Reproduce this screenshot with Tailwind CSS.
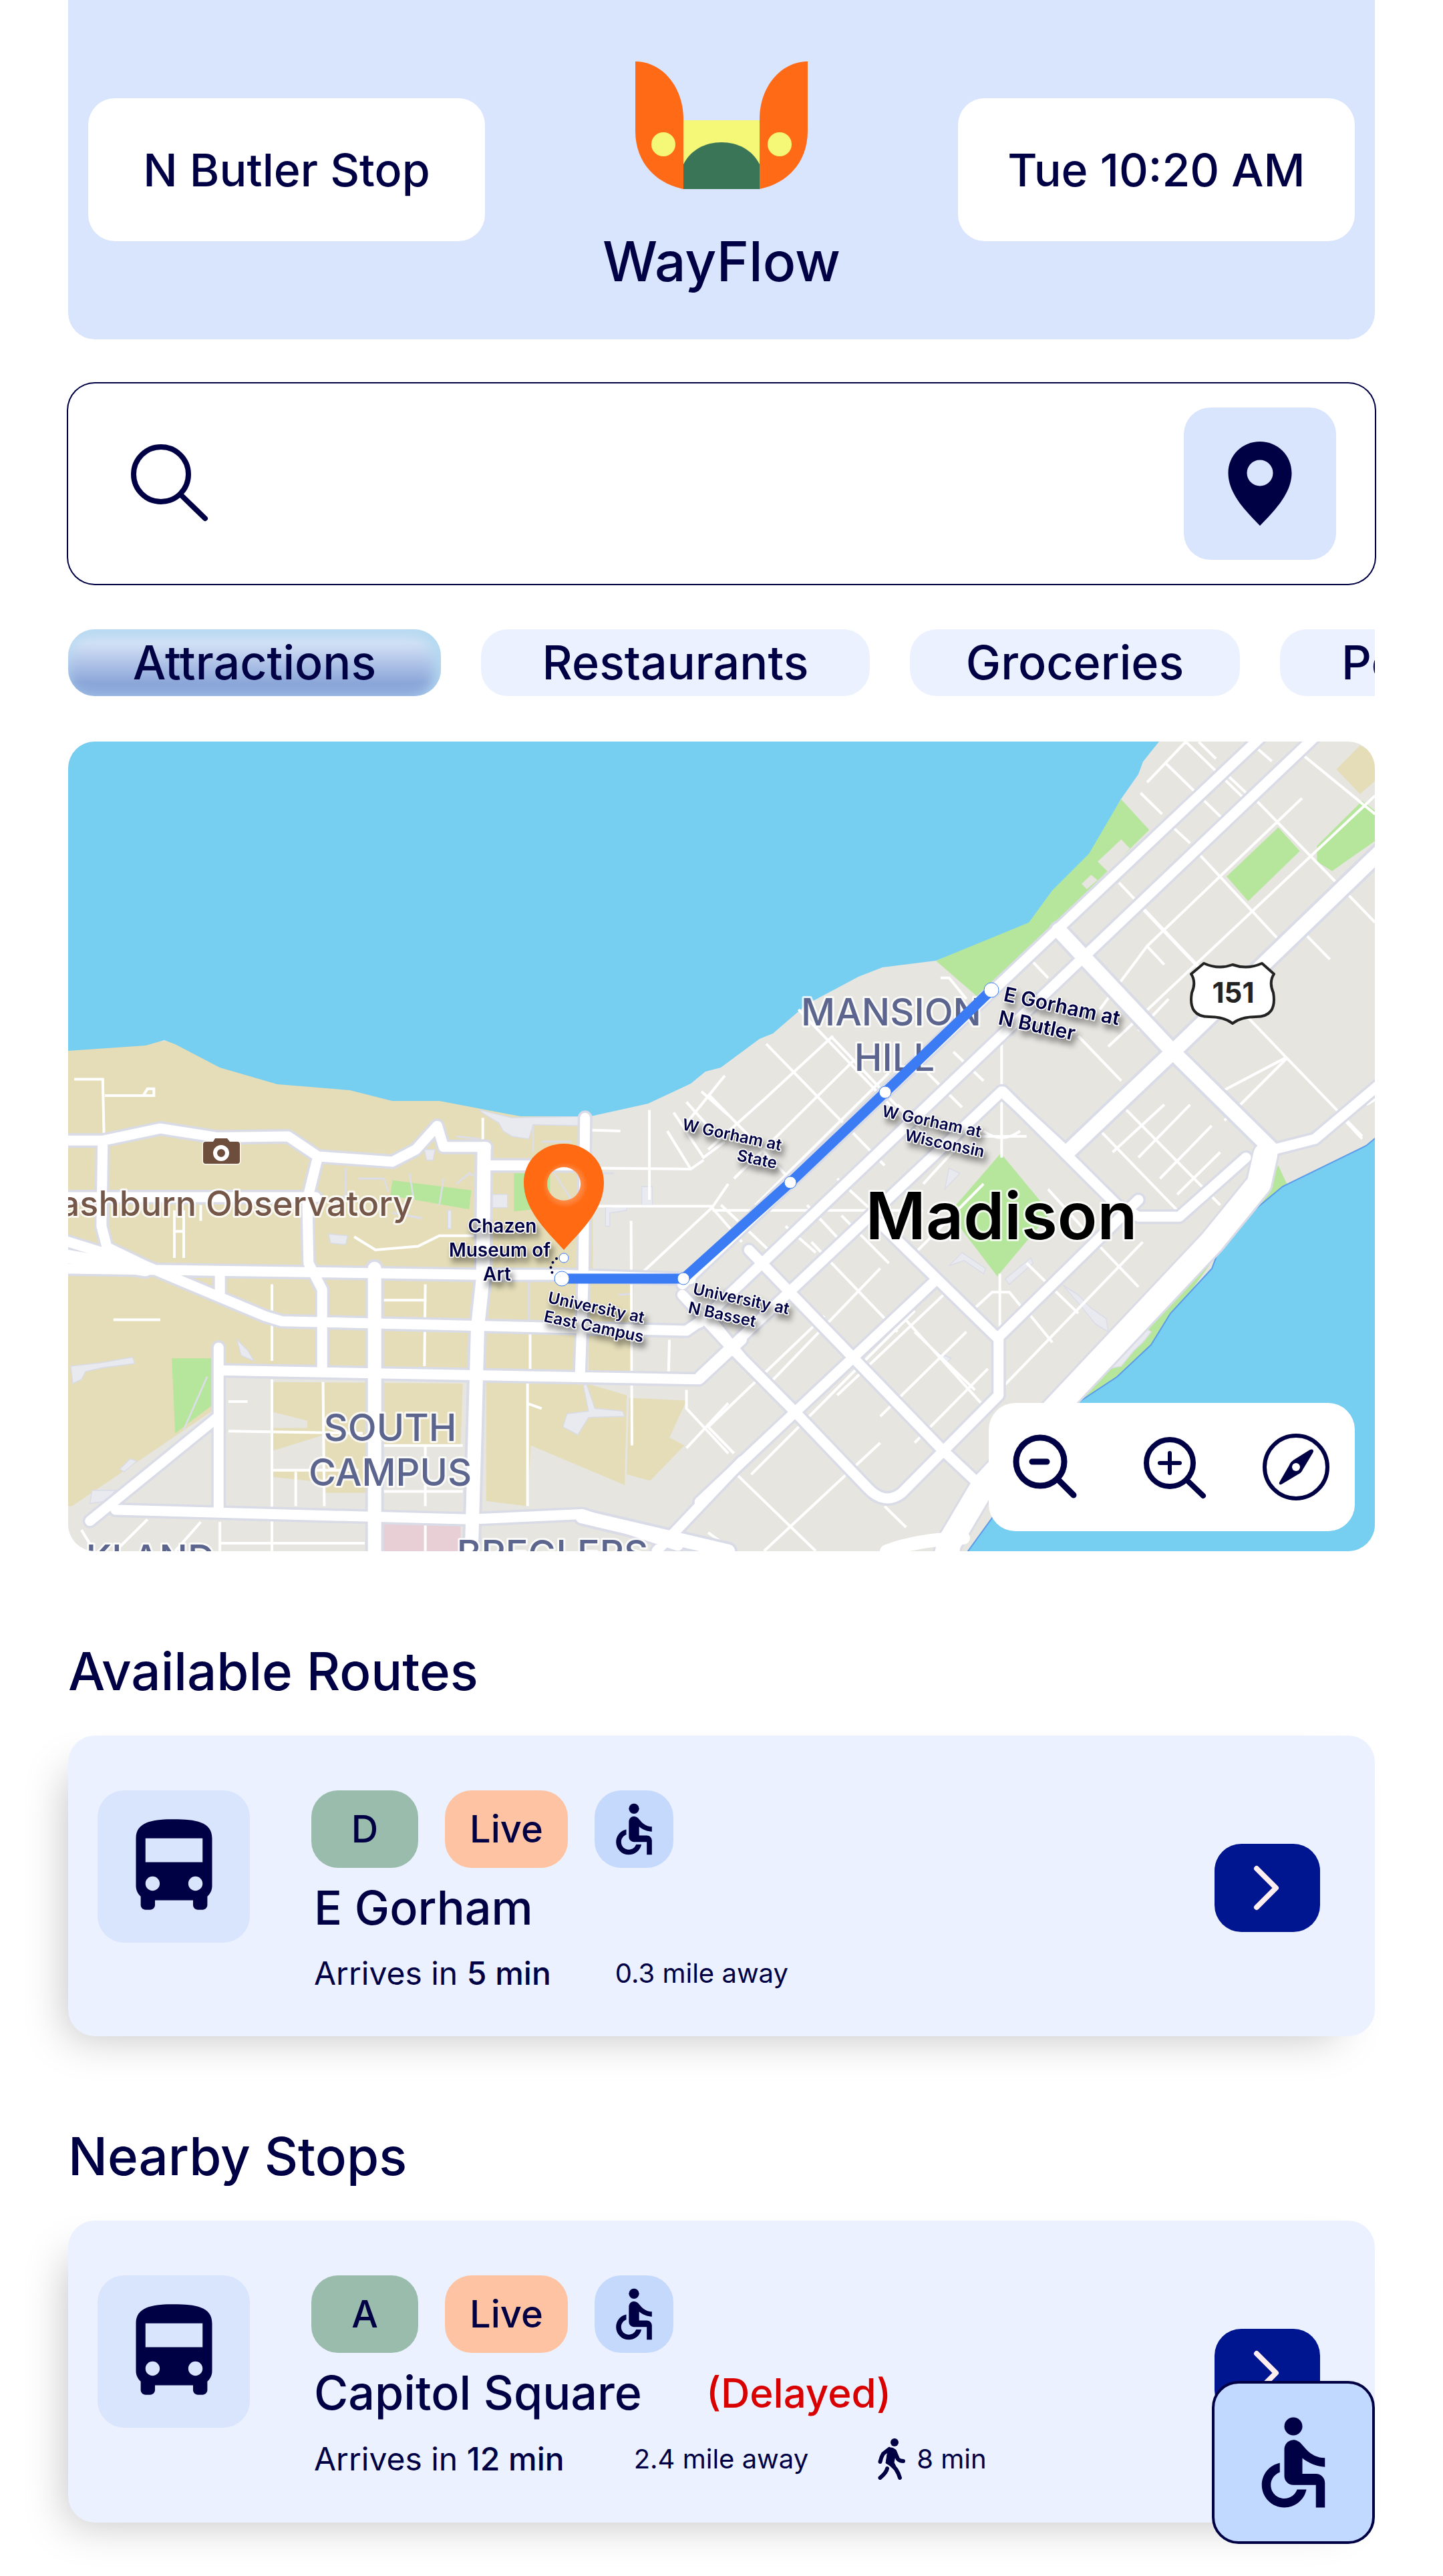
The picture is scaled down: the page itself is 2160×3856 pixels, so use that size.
<!DOCTYPE html>
<html lang="en">
<head>
  <meta charset="UTF-8">
  <meta name="viewport" content="width=device-width, initial-scale=1.0">
  <title>WayFlow</title>
  <script src="https://cdn.jsdelivr.net/npm/@tailwindcss/browser@4"></script>
</head>
<body class="bg-white text-[#000044] font-[Inter,'Open_Sans',sans-serif] font-medium">

  <!-- shared icons -->
  <svg class="hidden" aria-hidden="true">
    <symbol id="bus" viewBox="0 0 24 24">
      <path d="M4 16c0 .88.39 1.67 1 2.22V20c0 .55.45 1 1 1h1c.55 0 1-.45 1-1v-1h8v1c0 .55.45 1 1 1h1c.55 0 1-.45 1-1v-1.78c.61-.55 1-1.34 1-2.22V6c0-3.5-3.58-4-8-4s-8 .5-8 4v10zm3.5 1c-.83 0-1.5-.67-1.5-1.5S6.67 14 7.5 14s1.5.67 1.5 1.5S8.33 17 7.5 17zm9 0c-.83 0-1.5-.67-1.5-1.5s.67-1.5 1.5-1.5 1.5.67 1.5 1.5-.67 1.5-1.5 1.5zm1.5-6H6V6h12v5z"/>
    </symbol>
    <symbol id="wheelchair" viewBox="0 0 24 24">
      <circle cx="12" cy="4" r="2"/>
      <path d="M19 13v-2c-1.54.02-3.09-.75-4.07-1.83l-1.29-1.43c-.17-.19-.38-.34-.61-.45-.01 0-.01-.01-.02-.01H13c-.35-.2-.75-.3-1.19-.26C10.76 7.11 10 8.04 10 9.09V15c0 1.1.9 2 2 2h5v5h2v-5.5c0-1.1-.9-2-2-2h-3v-3.45c1.29 1.07 3.25 1.94 5 1.95zm-6.17 5c-.41 1.16-1.52 2-2.83 2-1.66 0-3-1.34-3-3 0-1.31.84-2.41 2-2.83V12.1c-2.28.46-4 2.48-4 4.9 0 2.76 2.24 5 5 5 2.42 0 4.44-1.72 4.9-4h-2.07z"/>
    </symbol>
    <symbol id="chevron" viewBox="0 0 44 72">
      <path d="M6 7L35 36L6 65" fill="none" stroke="#ffeef0" stroke-width="8" stroke-linecap="round" stroke-linejoin="round"/>
    </symbol>
  </svg>

  <main class="px-[102px] pb-[82px]">

    <header class="flex items-center justify-between bg-[#d9e4fd] rounded-b-[40px] px-[30px] py-[68px]">
      <div class="w-[594px] h-[214px] rounded-[40px] bg-white flex items-center justify-center text-[68px]">N Butler Stop</div>
      <div class="flex flex-col items-center pt-6">
        <svg class="w-[260px] h-[192px]" viewBox="0 0 260 192">
          <path d="M73 88H187V191H73z" fill="#f5f877"/>
          <path d="M73 191V154C84 132 106 121 130 121S176 132 187 154V191z" fill="#3a7558"/>
          <path d="M1 0C41 0 73 38 73 86V191C30 182 1 150 1 104z" fill="#ff6a16"/>
          <path d="M259 0C219 0 187 38 187 86V191C230 182 259 150 259 104z" fill="#ff6a16"/>
          <circle cx="43" cy="124" r="18" fill="#f5f877"/>
          <circle cx="217" cy="124" r="18" fill="#f5f877"/>
        </svg>
        <h1 class="mt-[60px] text-[82px] leading-[96px]">WayFlow</h1>
      </div>
      <div class="w-[594px] h-[214px] rounded-[40px] bg-white flex items-center justify-center text-[68px]">Tue 10:20 AM</div>
    </header>

    <form class="mt-[66px] flex items-center rounded-[40px] ring-2 ring-[#000044] pl-[92px] pr-[58px] py-9">
      <label for="search" aria-label="Search">
        <svg class="w-[120px] h-[120px]" viewBox="0 0 120 120" fill="none" stroke="#000044" stroke-width="8" stroke-linecap="round">
          <circle cx="47" cy="46" r="41"/>
          <path d="M77 77L113 112"/>
        </svg>
      </label>
      <input id="search" type="text" class="flex-1 min-w-0 mx-10 h-[120px] text-[68px] outline-none">
      <button type="button" aria-label="Use my location" class="size-[228px] rounded-[40px] bg-[#d9e4fd] flex items-center justify-center">
        <svg class="w-[96px] h-[126px]" viewBox="0 0 96 126">
          <path d="M48 0C21 0 0.500 21 0.500 47C0.500 79 29 106 48 126C67 106 95.500 79 95.500 47C95.500 21 75 0 48 0zM48 27.500A19.500 19.500 0 1 1 48 66.500A19.500 19.500 0 1 1 48 27.500z" fill="#000044"/>
        </svg>
      </button>
    </form>

    <nav class="mt-[68px] flex gap-[60px] overflow-hidden text-[70px] leading-[100px]">
      <button class="shrink-0 w-[558px] h-[100px] rounded-[40px] bg-linear-to-b from-[#d6e2f6] from-20% to-[#8ba6d9] to-80% shadow-[inset_-6px_8px_20px_4px_#b4d9f1]">Attractions</button>
      <button class="shrink-0 w-[582px] h-[100px] rounded-[40px] bg-[#ebf1fe]">Restaurants</button>
      <button class="shrink-0 w-[494px] h-[100px] rounded-[40px] bg-[#ebf1fe]">Groceries</button>
      <button class="shrink-0 w-[400px] h-[100px] rounded-[40px] bg-[#ebf1fe] pl-[92px] text-left">Post</button>
    </nav>

    <section class="relative mt-[68px] rounded-[40px] overflow-hidden">
      <svg class="block w-full" viewBox="0 0 1956 1212" font-family="Inter, sans-serif">
        <defs>
          <g id="streets-west" transform="translate(-12 -10) scale(.6378 .7908)">
            <path vector-effect="non-scaling-stroke" d="M0 768H100L235 745L370 762L535 760L605 798L780 808L835 785L885 740L900 780H1000M100 768L97 930L110 970L200 1005M0 875H600M605 798L580 880L583 1000L615 1050V1200M0 955L200 1005L480 1100L520 1110L1470 1128L1520 1100L1600 1180M0 1010L980 1022H1180L1480 1030M1000 815H1230M1232 725L1228 1030L1220 1215M375 1203L1500 1220L1600 1145M372 1160V1290L70 1488M372 1290V1465M130 1467L960 1485L1225 1475L1450 1535M1400 1545L1600 1375M375 1020V1060"/>
          </g>
          <g id="streets-west-wide" transform="translate(-12 -10) scale(.6378 .7908)">
            <path vector-effect="non-scaling-stroke" d="M995 783L992 1030L980 1120L965 1560M738 1010V1560M0 985L200 1012M1225 1480L1568 1545"/>
          </g>
          <g id="streets-east" transform="translate(958 -10) scale(.6441 .7908)">
            <path vector-effect="non-scaling-stroke" d="M1290 0L-60 1040M1415 0L-20 1113M835 790L682 675L-20 1215M525 1035L-20 1452M400 925L670 1140M95 975L540 1350L625 1415M-60 1060L60 1165L200 1280L370 1425Q410 1460 450 1435L675 1250V1140L1000 880M685 675L950 890L1000 912H1095L1250 800M1290 790L1410 765L1570 655"/>
          </g>
          <g id="streets-east-wide" transform="translate(958 -10) scale(.6441 .7908)">
            <path vector-effect="non-scaling-stroke" d="M815 370L1080 600L1310 785M1570 215L1080 600L835 790"/>
          </g>
          <g id="drive" transform="translate(958 -10) scale(.6441 .7908)">
            <path vector-effect="non-scaling-stroke" d="M1295 795L1280 850L1170 960L800 1280L640 1420L560 1530L540 1600"/>
          </g>
          <radialGradient id="pin-fill" gradientUnits="userSpaceOnUse" cx="744" cy="664" r="34">
            <stop offset=".7" stop-color="#ff8a45"/>
            <stop offset="1" stop-color="#ff6a13"/>
          </radialGradient>
          <filter id="label-shadow" x="-20%" y="-40%" width="150%" height="220%">
            <feDropShadow dx="4" dy="8" stdDeviation="4" flood-color="#000" flood-opacity=".4"/>
          </filter>
        </defs>

        <rect width="1956" height="1212" fill="#e6e5e0"/>

        <!-- campus ground and parks -->
        <g transform="translate(-12 -10) scale(.6378 .7908)">
          <path fill="#e4ddb8" d="M0 580H300L1000 690L1235 722L1220 1215H375V1270L28 1460H0zM500 1225L945 1228L940 1345H725L720 1435H620V1415L500 1405V1392H620V1325L500 1355V1312H580V1298L500 1282zM1000 1225L1245 1230L1330 1250L1325 1420L1105 1345L1095 1460L1000 1450zM1335 1255L1470 1260L1430 1330L1465 1345L1385 1412L1330 1400zM1240 900H1250V1030L1345 1035V1215L1240 1205z"/>
          <path fill="#b6e69c" d="M780 843L965 862L960 898L775 872zM1065 830H1150V895L1065 902zM262 1180H355V1270L270 1322z"/>
          <path fill="#e8cfd6" d="M755 1490H940V1560H755z"/>
          <path fill="#e9eaf0" stroke="#d9dbe6" stroke-width="2" d="M985 710L1060 725L1230 722V740L1110 738L1100 765L1060 760L1040 750L1030 735L990 715zM25 1195L100 1188L170 1178L175 1190L100 1198L60 1205L50 1220L30 1228zM1235 1228L1255 1275L1320 1280L1325 1290L1240 1292L1215 1325L1180 1310L1190 1285L1240 1280L1228 1232zM630 945L675 948L670 965L635 962zM1365 855L1390 855V890H1365zM75 1430H130L110 1450L70 1455zM415 1145L440 1165L455 1185L425 1175zM140 1390L165 1370L180 1375L150 1395zM1280 895L1330 890V900L1290 905V930H1280zM855 785H880L875 805H860zM1010 870H1050V895H1010zM910 900H918V935H910z"/>
          <path fill="none" stroke="#dcdde6" stroke-width="4" d="M670 820V870L640 890M700 840H760L770 865M820 830L830 880M900 840L890 890M930 850L960 830L985 840M780 905L850 915M1160 830L1200 880V960M1260 830H1300M1110 740V790M1130 770H1200M930 760L985 765M1100 1030V1110M1310 1060L1345 1058M345 1215L290 1315"/>
        </g>
        <g transform="translate(958 -10) scale(.6441 .7908)">
          <path fill="#b6e69c" d="M530 428L745 340L885 210L960 122L1025 180L820 345L625 495zM1205 268L1325 175L1375 220L1255 315zM1415 210L1520 125L1560 150V195L1450 258L1415 240zM680 792L795 905L672 1025L560 905zM1325 815L1345 850L1250 912zM1190 975L1080 1100L1035 1160L955 1220L840 1275L1000 1130z"/>
          <path fill="#e6e5e0" d="M905 240L960 198L980 215L930 260zM868 282L890 265L905 275L880 292z"/>
          <path fill="#e4ddb8" d="M1460 65L1515 20L1560 40V80L1515 112z"/>
          <path fill="#e9eaf0" stroke="#d9dbe6" stroke-width="2" d="M825 1042L860 1060L890 1085L925 1105L930 1130L900 1115L870 1085zM1000 1115L1030 1130L1010 1150L990 1165L960 1195L930 1200L950 1170L980 1155zM530 1168L565 1180L555 1188zM590 980L645 1010L640 1020L595 995L560 1005zM690 1030L750 990L755 1000L700 1040zM550 860L585 830L560 820z"/>
        </g>

        <!-- lakes -->
        <path fill="#76cef1" d="M0 0H1633L1609 30L1602 49L1576 86L1528 168L1473 223L1438 271L1299 328L1219 338L1183 352L1106 393L1055 437L1035 445L977 488L954 494L932 512L868 542L782 561H677L556 538H485L422 522L313 513L227 488L160 453L144 447L116 455L0 463z"/>
        <path fill="#76cef1" stroke="#5b9bea" stroke-width="2" d="M1960 591L1943 605L1818 666L1770 706L1721 765L1712 789L1650 856L1621 903L1570 951L1505 994L1344 1216H1960z"/>

        <!-- side streets -->
        <g fill="none" stroke="#fff">
          <g transform="translate(-12 -10) scale(.6378 .7908)">
            <path vector-effect="non-scaling-stroke" stroke-width="4" d="M33 652H100L103 760M105 683H220V670H205L195 683M268 900V990M290 990V900M268 940H290M330 890V920M497 1040V1185M497 1220V1545M857 1040L855 1195M757 1070H860M617 1225L620 1460M395 1318L710 1322M395 1262H440M500 1392H700M553 1395V1460M757 1345H945M757 1432H945M857 1345V1460M857 1495V1545M375 1530H715M375 1490V1545M50 1505L80 1545M130 1545L205 1485M270 1545L330 1490M690 950L740 975L840 968L890 948H985M125 1107H235M1103 1130V1200M1097 1220V1460M1340 920L1342 1345M1245 892H1530M1245 820L1480 822L1510 805M1383 710V880M1240 748L1315 750M1370 1015L1530 895L1568 850M1530 895L1600 960M1430 1145L1428 1205M1470 1240V1275L1568 1360M1470 1350L1568 1265M1470 695L1525 745M1470 735L1560 645M1505 675L1568 720M1440 715L1510 800L1560 770M1425 750L1480 822M992 725V780M1095 1265L1130 1275"/>
          </g>
          <g transform="translate(958 -10) scale(.6441 .7908)">
            <path vector-effect="non-scaling-stroke" stroke-width="4" d="M1005 110L1055 150M1065 55L1210 170M1110 13L1245 120M1140 13L1180 45M1275 125L1550 355M1275 25L1310 50M1205 75L1270 125M1385 40L1550 150M1140 225L1340 400M1080 175L1120 205M955 280L1200 490M1010 330L1250 535M950 500L1000 540M860 570L960 655M1385 375L1445 425M755 430L790 460M1020 90L1110 13M930 380L1130 225M1020 400L1380 120M930 590L1550 115M1000 560L1070 500M1170 685L1345 610M1200 730L1345 612L1190 480M1345 612L1520 760M990 670L1050 620M940 790L1060 700M1000 800L1120 700M1050 840L1170 740M1090 870L1190 790M960 700L1190 890M900 740L1090 900M910 520L1020 400L1060 435M135 585L410 815M210 520L480 750M285 570L540 790M0 680L120 780L200 850M0 785L130 690L290 570M60 840L340 615M110 890L420 640M540 460L560 460L600 500M570 600L640 655M510 640L590 705M440 700L500 745M300 840L380 900M230 890L310 960M180 930L250 980M500 850L590 770M240 960L440 1130M310 910L420 1000M620 760H740M640 750Q682 775 725 750M682 570V800M678 1020V1140M10 900H500M30 890L160 990M620 1085L660 1055H700L730 1085M470 990L640 850M790 860L900 960L1000 1045M740 1000L860 1095M690 1230L1010 960M740 1090L800 1150M0 1310L270 1100M100 1400L480 1090M60 1395L250 1545M140 1230L400 1010M130 1545L400 1340M300 1250L560 1050M400 1290L600 1130M440 1090L640 1270M480 1340L650 1200M0 1310L60 1360M480 1130L620 1240M410 1460L460 1500M0 1510L60 1545M1530 700L1550 690M1480 730L1520 765"/>
          </g>
        </g>

        <!-- main streets: casing first, then surface -->
        <g fill="none" stroke="#d9dbe6" stroke-linecap="round" stroke-linejoin="round">
          <use href="#streets-west" stroke-width="22"/>
          <use href="#streets-west-wide" stroke-width="28"/>
          <use href="#streets-east" stroke-width="22"/>
          <use href="#streets-east-wide" stroke-width="30"/>
          <use href="#drive" stroke-width="42"/>
        </g>
        <g fill="none" stroke="#fff" stroke-linecap="round" stroke-linejoin="round">
          <use href="#streets-west" stroke-width="15"/>
          <use href="#streets-west-wide" stroke-width="20"/>
          <use href="#streets-east" stroke-width="15"/>
          <use href="#streets-east-wide" stroke-width="22"/>
          <use href="#drive" stroke-width="36"/>
          <path d="M1225 1212Q1270 1195 1340 1192" stroke-width="20"/>
        </g>

        <!-- place names -->
        <g stroke="#fff" stroke-opacity=".8" stroke-width="6" stroke-linejoin="round" paint-order="stroke">
          <g fill="#5c658e" font-size="56" font-weight="500" text-anchor="middle">
            <text x="1232" y="425">MANSION</text>
            <text x="1237" y="493">HILL</text>
            <text x="482" y="1047">SOUTH</text>
            <text x="482" y="1114">CAMPUS</text>
            <text x="123" y="1243">KLAND</text>
            <text x="725" y="1236">BREGLERS</text>
          </g>
          <text x="516" y="710" font-size="52" font-weight="500" fill="#75574a" text-anchor="end">ashburn Observatory</text>
          <text x="1397" y="745" font-size="98" font-weight="600" fill="#000" text-anchor="middle">Madison</text>
        </g>

        <g>
          <path d="M206 599H217L220 594H238L242 599H253Q257 599 257 603V628Q257 632 253 632H206Q202 632 202 628V603Q202 599 206 599z" fill="#6d4d3c" stroke="#fff" stroke-opacity=".8" stroke-width="3" paint-order="stroke"/>
          <circle cx="229" cy="616" r="9" fill="none" stroke="#fff" stroke-width="6"/>
        </g>

        <g>
          <path d="M1700 332Q1722 342 1743 334Q1765 342 1787 332L1805 348Q1797 360 1804 376Q1810 412 1778 412Q1755 412 1743 422Q1731 412 1708 412Q1676 412 1682 376Q1689 360 1681 348z" fill="#fff" stroke="#222" stroke-width="4" stroke-linejoin="round"/>
          <text x="1744" y="391" font-size="42" font-weight="700" fill="#222" text-anchor="middle">151</text>
        </g>

        <!-- route -->
        <path d="M739 804H921L1081 660L1223 525L1382 372" fill="none" stroke="#3b7cf5" stroke-width="15" stroke-linejoin="round"/>
        <g fill="#fff" stroke="#3b7cf5" stroke-width="1">
          <circle cx="739" cy="804" r="11"/>
          <circle cx="742" cy="773" r="7"/>
          <circle cx="921" cy="804" r="9"/>
          <circle cx="1081" cy="660" r="9"/>
          <circle cx="1223" cy="525" r="9"/>
          <circle cx="1382" cy="372" r="11"/>
        </g>
        <path d="M731 774Q717 786 726 797" fill="none" stroke="#000044" stroke-width="4" stroke-linecap="round" stroke-dasharray="0 8"/>
        <path d="M742 602C708 602 682 628 682 660C682 702 718 734 742 761C766 734 802 702 802 660C802 628 776 602 742 602zM742 637A25 25 0 1 1 742 687A25 25 0 1 1 742 637z" fill="url(#pin-fill)"/>

        <g fill="#000044" font-weight="600" stroke="#fff" stroke-width="3" stroke-linejoin="round" paint-order="stroke" filter="url(#label-shadow)">
          <g font-size="28" text-anchor="middle">
            <text x="650" y="735">Chazen</text>
            <text x="646" y="771">Museum of</text>
            <text x="642" y="807">Art</text>
          </g>
          <g font-size="30">
            <text transform="translate(1399 388) rotate(12)">E Gorham at</text>
            <text transform="translate(1391 423) rotate(12)">N Butler</text>
          </g>
          <g font-size="24">
            <text transform="translate(1217 561) rotate(12)">W Gorham at</text>
            <text transform="translate(1251 597) rotate(12)">Wisconsin</text>
            <text transform="translate(918 581) rotate(12)">W Gorham at</text>
            <text transform="translate(1000 627) rotate(12)">State</text>
            <text transform="translate(717 840) rotate(12)">University at</text>
            <text transform="translate(711 868) rotate(12)">East Campus</text>
            <text transform="translate(934 827) rotate(12)">University at</text>
            <text transform="translate(927 855) rotate(12)">N Basset</text>
          </g>
        </g>
      </svg>

      <div class="absolute right-[30px] bottom-[30px] w-[548px] h-[192px] rounded-[40px] bg-white flex items-center justify-between pl-9 pr-[38px]">
        <button aria-label="Zoom out">
          <svg class="size-[98px]" viewBox="0 0 98 98" fill="none" stroke="#000044" stroke-width="9" stroke-linecap="round">
            <circle cx="41" cy="41" r="36"/>
            <path d="M68 68L91 91M29 41H51"/>
          </svg>
        </button>
        <button aria-label="Zoom in">
          <svg class="size-[98px] overflow-visible" viewBox="-6 2 98 98" fill="none" stroke="#000044" stroke-width="8" stroke-linecap="round">
            <circle cx="42" cy="45" r="35"/>
            <path d="M68 71L92 94"/>
            <path d="M27 45H57M42 30V60" stroke-width="6"/>
          </svg>
        </button>
        <button aria-label="Compass">
          <svg class="size-[100px]" viewBox="0 0 100 100" fill="none">
            <circle cx="50" cy="50" r="47" stroke="#000044" stroke-width="6"/>
            <path d="M75 24Q77 26 75 29L60 54Q58 59 53 61L28 76Q24 77 25 73L40 47Q42 42 47 39L71 24Q74 23 75 24z" fill="#000044"/>
            <circle cx="50" cy="50" r="6" fill="#fff"/>
          </svg>
        </button>
      </div>
    </section>

    <h2 class="mt-[132px] text-[78px] leading-[96px]">Available Routes</h2>

    <article class="mt-12 flex items-start rounded-[40px] bg-[#ebf1fe] shadow-[-28px_28px_64px_-28px_rgba(0,0,0,0.25)] pl-11 pr-[82px]">
      <div class="mt-[82px] size-[228px] shrink-0 rounded-[40px] bg-[#d9e4fd] flex items-center justify-center">
        <svg class="size-[171px] fill-[#000044]"><use href="#bus"/></svg>
      </div>
      <div class="flex-1 ml-[92px] pt-[82px] pb-16">
        <div class="flex gap-10 text-[56px]">
          <span class="w-[160px] h-[116px] rounded-[40px] bg-[#99bcac] flex items-center justify-center">D</span>
          <span class="w-[184px] h-[116px] rounded-[40px] bg-[#fec3a2] flex items-center justify-center">Live</span>
          <span class="w-[118px] h-[116px] rounded-[40px] bg-[#c5d9fd] flex items-center justify-center">
            <svg class="size-[92px] fill-[#000044]" role="img" aria-label="Wheelchair accessible"><use href="#wheelchair"/></svg>
          </span>
        </div>
        <h3 class="mt-5 pl-1 text-[70px] leading-[80px]">E Gorham</h3>
        <div class="mt-7 pl-1 flex items-center gap-24 leading-[60px]">
          <p class="text-[48px] font-normal">Arrives in <b class="font-medium">5 min</b></p>
          <p class="text-[40px] font-normal">0.3 mile away</p>
        </div>
      </div>
      <button aria-label="Open route D" class="mt-[162px] w-[158px] h-[132px] rounded-[40px] bg-[#001590] flex items-center justify-center">
        <svg class="w-11 h-[72px]"><use href="#chevron"/></svg>
      </button>
    </article>

    <h2 class="mt-[132px] text-[78px] leading-[96px]">Nearby Stops</h2>

    <article class="mt-12 flex items-start rounded-[40px] bg-[#ebf1fe] shadow-[-28px_28px_64px_-28px_rgba(0,0,0,0.25)] pl-11 pr-[82px]">
      <div class="mt-[82px] size-[228px] shrink-0 rounded-[40px] bg-[#d9e4fd] flex items-center justify-center">
        <svg class="size-[171px] fill-[#000044]"><use href="#bus"/></svg>
      </div>
      <div class="flex-1 ml-[92px] pt-[82px] pb-16">
        <div class="flex gap-10 text-[56px]">
          <span class="w-[160px] h-[116px] rounded-[40px] bg-[#99bcac] flex items-center justify-center">A</span>
          <span class="w-[184px] h-[116px] rounded-[40px] bg-[#fec3a2] flex items-center justify-center">Live</span>
          <span class="w-[118px] h-[116px] rounded-[40px] bg-[#c5d9fd] flex items-center justify-center">
            <svg class="size-[92px] fill-[#000044]" role="img" aria-label="Wheelchair accessible"><use href="#wheelchair"/></svg>
          </span>
        </div>
        <div class="mt-5 pl-1 flex items-center gap-24 leading-[80px]">
          <h3 class="text-[70px]">Capitol Square</h3>
          <p class="text-[60px] text-[#d90000]">(Delayed)</p>
        </div>
        <div class="mt-7 pl-1 flex items-center gap-[104px] leading-[60px]">
          <p class="text-[48px] font-normal">Arrives in <b class="font-medium">12 min</b></p>
          <p class="text-[40px] font-normal">2.4 mile away</p>
          <p class="flex items-center gap-4 text-[40px] font-normal">
            <svg class="w-[42px] h-[62px]" viewBox="0 0 42 62" fill="none" stroke="#000044" stroke-linecap="round" stroke-linejoin="round">
              <circle cx="25" cy="6" r="6" fill="#000044" stroke="none"/>
              <path d="M15 16Q20 12 25 16L27 22L24 36L28 44L22 43L12 37L14 24z" fill="#000044" stroke-width="1"/>
              <path d="M17 16L8 23Q5 28 3.500 35M25 19L30 31Q33 34 38 34" stroke-width="6"/>
              <path d="M20 39L27 46Q31 52 33 59M14 45Q13 51 3.500 59" stroke-width="6"/>
            </svg>
            8 min
          </p>
        </div>
      </div>
      <button aria-label="Open stop A" class="mt-[162px] w-[158px] h-[132px] rounded-[40px] bg-[#001590] flex items-center justify-center">
        <svg class="w-11 h-[72px]"><use href="#chevron"/></svg>
      </button>
    </article>
  </main>

  <button aria-label="Accessibility options" class="fixed right-[102px] bottom-12 size-[244px] rounded-[40px] border-4 border-[#000044] bg-[#c1d8ff] flex items-center justify-center">
    <svg class="size-[162px] fill-[#000044]"><use href="#wheelchair"/></svg>
  </button>
</body>
</html>
